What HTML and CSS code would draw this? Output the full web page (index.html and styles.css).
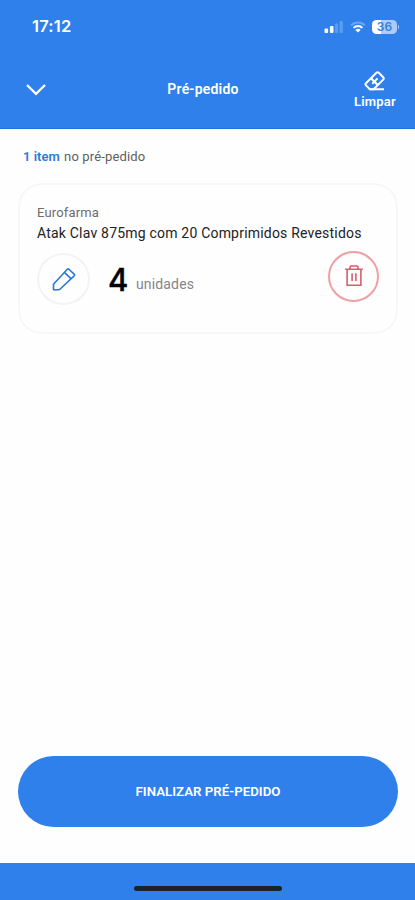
FILE: index.html
```html
<!DOCTYPE html>
<html lang="pt-BR">
<head>
  <meta charset="UTF-8" />
  <meta name="viewport" content="width=device-width, initial-scale=1.0"/>
  <title>Pré-pedido</title>
  <link rel="stylesheet" href="styles.css">
</head>
<body>
  <header>
    <div class="status">
      <span class="time">17:12</span>
      <div class="status-icons">
        <svg width="20" height="14" viewBox="0 0 20 14" fill="#fff">
          <rect x="1.5" y="8.5" width="3.6" height="4.5" rx="1"/>
          <rect x="6.9" y="6" width="3.6" height="7" rx="1"/>
          <rect x="11.9" y="3.5" width="3.2" height="9.5" rx="1" opacity="0.22"/>
          <rect x="16.6" y="1" width="3.2" height="12" rx="1" opacity="0.22"/>
        </svg>
        <svg width="16" height="14" viewBox="0 0 16 14" fill="none" stroke="#fff" stroke-width="2">
          <path d="M1.2 5.2a9.6 9.6 0 0 1 13.6 0" opacity="0.3"/>
          <path d="M3.6 7.9a6.2 6.2 0 0 1 8.8 0"/>
          <path d="M8 12.6L5.4 10a3.7 3.7 0 0 1 5.2 0z" fill="#fff" stroke="none"/>
        </svg>
        <div class="battery"><span>36</span></div>
      </div>
    </div>
    <nav>
      <button class="back" aria-label="Fechar">
        <svg width="22" height="14" viewBox="0 0 22 14" fill="none" stroke="#fff" stroke-width="2.3">
          <path d="M2 2l9 8.8L20 2"/>
        </svg>
      </button>
      <h1>Pré-pedido</h1>
      <button class="clear">
        <svg width="24" height="22" viewBox="0 0 24 22" fill="none" stroke="#fff" stroke-width="2" stroke-linejoin="round">
          <path d="M6.8 19.2L3 15.4q-1.1-1.1 0-2.2L13.4 2.8q1.2-1.2 2.4 0l4.4 4.4q1.2 1.2 0 2.4l-9.6 9.6z"/>
          <path d="M8 8.2l7 7M14.6 8.4l-5.4 5.4M6.8 19.2H21"/>
        </svg>
        <span>Limpar</span>
      </button>
    </nav>
  </header>

  <main>
    <p class="count"><b>1 item</b> <span>no pré-pedido</span></p>
    <div class="card">
      <div class="brand">Eurofarma</div>
      <div class="product">Atak Clav 875mg com 20 Comprimidos Revestidos</div>
      <div class="row">
        <button class="round edit" aria-label="Editar">
          <svg width="24" height="24" viewBox="0 0 24 24" fill="none" stroke="#2878d8" stroke-width="1.6" stroke-linejoin="round">
            <path d="M1.5 17.2L15.3 2.2q.8-.8 1.6 0l5.2 5q.8.8 0 1.6L8.2 22q-.7.7-1.6.7H1.5z"/>
            <path d="M12.4 5.4l6.8 6.4"/>
          </svg>
        </button>
        <span class="qty">4</span>
        <span class="unit">unidades</span>
        <button class="round delete" aria-label="Excluir">
          <svg width="20" height="24" viewBox="0 0 20 24" fill="none" stroke="#d2606a" stroke-width="1.6">
            <path d="M1.2 5.3h17.6M3.1 5.3v15.9h13.8V5.3M6 5V3.2q0-1.2 1.2-1.2h5.6q1.2 0 1.2 1.2V5M8.1 9.3v7.6M11.9 9.3v7.6"/>
          </svg>
        </button>
      </div>
    </div>
    <button class="finish">FINALIZAR PRÉ-PEDIDO</button>
  </main>

  <footer><div class="home-bar"></div></footer>
</body>
</html>
```

FILE: styles.css
```css
* {
  box-sizing: border-box;
}

body {
  margin: 0;
  height: 900px;
  display: flex;
  flex-direction: column;
  font-family: Roboto, sans-serif;
  background-color: #fefefe;
  color: #222;
}

button {
  padding: 0;
  border: none;
  background: none;
  font-family: inherit;
  cursor: pointer;
}

svg {
  display: block;
}

header {
  height: 129px;
  background-color: #2f80eb;
  border-bottom: 1px solid #1c74df;
  color: #fff;
}

.status {
  display: flex;
  justify-content: space-between;
  align-items: center;
  height: 53px;
  padding: 0 16px 0 32px;
}

.time {
  font-family: Inter, sans-serif;
  font-size: 16.5px;
  font-weight: 600;
  letter-spacing: 0.2px;
  margin-top: -2px;
}

.status-icons {
  display: flex;
  align-items: center;
  gap: 7px;
}

.battery {
  position: relative;
  width: 25px;
  height: 14px;
  margin-left: -1px;
  margin-right: 2px;
  border-radius: 4.5px;
  background: linear-gradient(90deg, #fff 38%, #abcdf8 38%);
  color: #3b7fd9;
  font: 600 12px/14px Inter, sans-serif;
  text-align: center;
}

.battery::after {
  content: "";
  position: absolute;
  right: -2px;
  top: 5px;
  width: 1.5px;
  height: 4px;
  border-radius: 0 2px 2px 0;
  background-color: #abcdf8;
}

nav {
  display: grid;
  grid-template-columns: 60px 1fr 60px;
  align-items: center;
  height: 74px;
  padding: 0 9px 0 5px;
}

.back {
  justify-self: center;
  margin-left: 2px;
}

h1 {
  margin: 0 5px 2px 0;
  font-size: 14px;
  font-weight: 600;
  letter-spacing: 0.2px;
  text-align: center;
}

.clear {
  display: flex;
  flex-direction: column;
  align-items: center;
  margin: -1px 1px 0 -1px;
  color: #fff;
  font-size: 13px;
  font-weight: 600;
  line-height: 16px;
  letter-spacing: 0.2px;
  gap: 2px;
}

main {
  flex: 1;
  display: flex;
  flex-direction: column;
  padding: 19px 17px 36px 18px;
}

.count {
  margin: 0 0 17px 5px;
  font-size: 13px;
  line-height: 18px;
  letter-spacing: 0.15px;
  color: #606060;
}

.count b {
  margin-right: 1px;
  color: #2b7bd3;
  font-weight: 600;
  letter-spacing: 0;
}

.card {
  height: 151px;
  padding: 20px 17px 0;
  border: 2px solid #f7f7f7;
  border-radius: 24px;
}

.brand {
  font-size: 13px;
  line-height: 16px;
  letter-spacing: 0.15px;
  color: #6c6c6c;
}

.product {
  margin-top: 2px;
  font-size: 14px;
  line-height: 20px;
  letter-spacing: 0.2px;
  white-space: nowrap;
}

.row {
  display: flex;
  align-items: center;
  margin-top: 10px;
}

.round {
  display: flex;
  align-items: center;
  justify-content: center;
  width: 53px;
  height: 52px;
  border-radius: 50%;
}

.edit {
  border: 2px solid #f2f3f4;
}

.delete {
  width: 51px;
  height: 51px;
  margin: -6px 0 0 auto;
  border: 2px solid #f0a0a5;
}

.qty {
  width: 18px;
  margin: 2px 0 0 18px;
  font: 500 31px/40px Inter, sans-serif;
  letter-spacing: -1px;
  -webkit-text-stroke: 0.4px #000;
  color: #000;
}

.unit {
  margin: 9px 0 0 10px;
  font-size: 14px;
  letter-spacing: 0.15px;
  color: #858585;
}

.finish {
  height: 71px;
  margin-top: auto;
  border-radius: 36px;
  background-color: #2f80eb;
  color: #fff;
  font-size: 13.3px;
  font-weight: 600;
}

footer {
  height: 37px;
  padding-top: 23px;
  background-color: #2f80eb;
}

.home-bar {
  width: 148px;
  height: 5px;
  margin: 0 auto;
  border-radius: 3px;
  background-color: #1c2228;
}
```
